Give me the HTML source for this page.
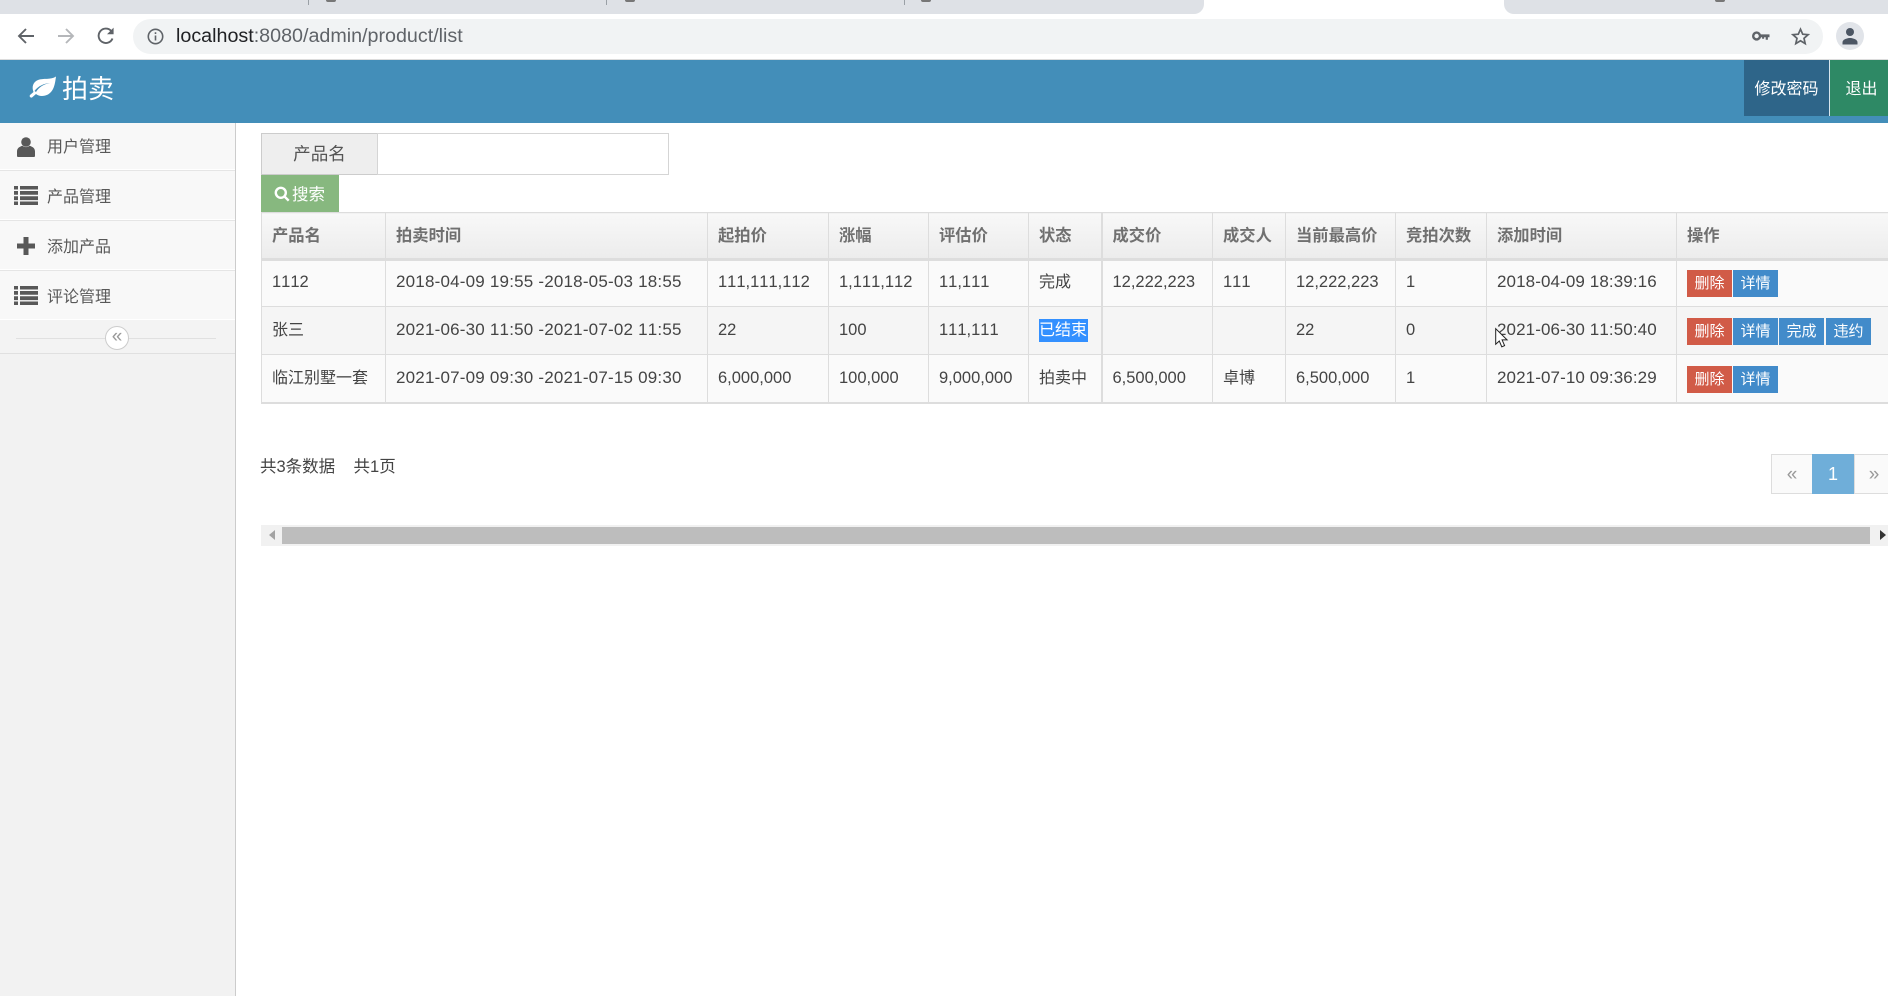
<!DOCTYPE html>
<html lang="zh">
<head>
<meta charset="utf-8">
<title>拍卖</title>
<style>
*{box-sizing:border-box}
html,body{margin:0;padding:0;width:1888px;height:996px;overflow:hidden;background:#fff;font-family:"Liberation Sans","Noto Sans CJK SC",sans-serif;color:#393939;font-kerning:none}
.abs{position:absolute}
svg{position:absolute;display:block;overflow:visible}
#tabs{left:0;top:0;width:1888px;height:14px;background:#dee1e6}
#atab{left:1203px;top:0;width:301px;height:14px;background:#fff}
.sep{top:0;width:1px;height:5px;background:#9aa0a6}
.fav{top:0;width:10px;height:2px;border-radius:0 0 5px 5px;background:#777}
#bar{left:0;top:14px;width:1888px;height:45px;background:#fff}
#bline{left:0;top:59px;width:1888px;height:1px;background:#dcdcdc}
#pill{left:133px;top:19px;width:1690px;height:35px;border-radius:18px;background:#f1f3f4}
#url{left:176px;top:24px;font-size:19.7px;line-height:25px;color:#5f6368;white-space:nowrap}
#url b{font-weight:400;color:#202124}
#av{left:1836px;top:22px;width:28px;height:28px;border-radius:50%;background:#e1e4e9}
#head{left:0;top:60px;width:1888px;height:63px;background:#438eb9}
#logo{left:62px;top:71px;font-size:26px;line-height:36px;color:#fff}
.hb{top:60px;height:56px;color:#fff;font-size:16px;line-height:59px;text-align:center}
#side{left:0;top:123px;width:236px;height:873px;background:#f2f2f2;border-right:1px solid #ccc}
.it{position:absolute;left:0;width:235px;height:50px;background:#f8f8f8;border-bottom:1px solid #e5e5e5;box-shadow:inset 0 -1px 0 #fff;font-size:16px;color:#585858;padding-left:47px}
#col{left:0;top:320px;width:235px;height:34px;border-bottom:1px solid #e0e0e0;background:#f3f3f3}
#ln{left:16px;top:338px;width:200px;height:1px;background:#e0e0e0}
#circ{left:105px;top:326px;width:24px;height:24px;border-radius:50%;background:#fff;border:1px solid #ccc;color:#999;font-size:19px;line-height:19px;text-align:center}
#lab{left:261px;top:133px;width:117px;height:42px;background:#eee;border:1px solid #ccc;font-size:17.6px;line-height:40px;text-align:center;color:#555;padding-left:0}
#inp{left:377px;top:133px;width:292px;height:42px;background:#fff;border:1px solid #d5d5d5}
#sb{left:261px;top:175px;width:78px;height:37px;background:#87b87f;color:#fff;font-size:16.5px;line-height:40px;padding-left:31px}
table{position:absolute;left:261px;top:212px;width:1665px;border-collapse:collapse;table-layout:fixed}
th{height:47px;padding:0 0 3px 10px;text-align:left;font-size:16.3px;font-weight:700;color:#707070;background:linear-gradient(#f8f8f8,#ececec);border:1px solid #ddd;border-bottom:3px solid #ddd}
td{height:48px;padding:0 0 1px 10px;font-size:16px;line-height:20px;color:#444;border:1px solid #ddd;background:#fafafa;white-space:nowrap;vertical-align:middle}
tr.e td{background:#f5f5f5}
tbody tr:first-child td{height:47px;padding-bottom:3px}
tbody tr:last-child td{border-bottom:2px solid #ddd;padding-bottom:0}
td.n{font-size:16.5px}
td.t{font-size:17px;letter-spacing:.2px}
td.u{font-size:17px;letter-spacing:.1px}
td.c,tbody tr td.c{padding-top:2px}
.thk{border-left:2px solid #ddd}
.sel{background:#3390ff;color:#fff;display:inline-block;height:23px;line-height:23px;width:49px;vertical-align:middle}
.btns{display:flex;padding-top:3px}
tbody tr:first-child .btns{padding-top:2px}
tbody tr:last-child .btns{padding-top:2px}
.btn{width:45px;height:27px;font-size:15px;line-height:27px;text-align:center;color:#fff;margin-right:1px}
.r{background:#d15b47}.b{background:#428bca}
#stat{left:260px;top:455px;font-size:16.5px;line-height:24px;color:#444;white-space:pre}
.pg{top:454px;height:40px;text-align:center;line-height:39px;color:#999;font-size:19px;background:#fafafa;border:1px solid #ddd}
#track{left:261px;top:525px;width:1627px;height:21px;background:#f1f1f1}
#thumb{left:282px;top:527px;width:1588px;height:17px;background:#bdbdbd}
</style>
</head>
<body>
<div class="abs" id="tabs"></div>
<div class="abs sep" style="left:308px"></div>
<div class="abs sep" style="left:606px"></div>
<div class="abs sep" style="left:904px"></div>
<div class="abs fav" style="left:326px"></div>
<div class="abs fav" style="left:625px"></div>
<div class="abs fav" style="left:921px"></div>
<div class="abs fav" style="left:1220px"></div>
<div class="abs fav" style="left:1715px"></div>
<div class="abs" id="bar"></div>
<div class="abs" id="atab"></div>
<div class="abs" style="left:1190px;top:0;width:14px;height:14px;background:#fff"></div>
<div class="abs" style="left:1190px;top:0;width:14px;height:14px;background:#dee1e6;border-radius:0 0 10px 0"></div>
<div class="abs" style="left:1504px;top:0;width:14px;height:14px;background:#fff"></div>
<div class="abs" style="left:1504px;top:0;width:14px;height:14px;background:#dee1e6;border-radius:0 0 0 10px"></div>
<div class="abs" id="bline"></div>
<div class="abs" id="pill"></div>

<svg style="left:16px;top:26px" width="20" height="20" viewBox="0 0 20 20" fill="none" stroke="#5f6368" stroke-width="1.9"><path d="M18 10H3M10 3l-7 7 7 7"/></svg>
<svg style="left:56px;top:26px" width="20" height="20" viewBox="0 0 20 20" fill="none" stroke="#b5b7ba" stroke-width="1.9"><path d="M2 10h15M10 3l7 7-7 7"/></svg>
<svg style="left:96px;top:26px" width="20" height="20" viewBox="0 0 20 20" fill="none" stroke="#5f6368" stroke-width="1.9"><path d="M16.5 12.5A7.2 7.2 0 1 1 15.2 5"/><path d="M17.6 1.6v6.6H11z" fill="#5f6368" stroke="none"/></svg>
<svg style="left:147px;top:28px" width="17" height="17" viewBox="0 0 17 17" fill="none" stroke="#5f6368" stroke-width="1.6"><circle cx="8.5" cy="8.5" r="7.2"/><path d="M8.5 7.5v5M8.5 4.2v1.8"/></svg>
<div class="abs" id="url"><b>localhost</b>:8080/admin/product/list</div>
<svg style="left:1752px;top:30px" width="18" height="12" viewBox="0 0 18 12"><circle cx="4.6" cy="6" r="3.4" fill="none" stroke="#5f6368" stroke-width="2.4"/><path d="M7.5 4.4h10v2.8h-1.6v2.6h-2.2V7.2h-1.6v1.6h-2V7.2H7.5z" fill="#5f6368"/></svg>
<svg style="left:1791px;top:27px" width="19" height="19" viewBox="0 0 19 19" fill="none" stroke="#5f6368" stroke-width="1.7"><path d="M9.5 2.2l2.2 5 5.4.5-4.1 3.6 1.2 5.3-4.7-2.8-4.7 2.8 1.2-5.3-4.1-3.6 5.4-.5z"/></svg>
<div class="abs" id="av"></div>
<svg style="left:1841px;top:27px" width="18" height="18" viewBox="0 0 18 18" fill="#4b5563"><circle cx="9" cy="5" r="4"/><path d="M1.5 17.5v-2.2c0-3 5-4.3 7.5-4.3s7.500 1.300 7.500 4.300v2.200z"/></svg>

<div class="abs" id="head"></div>
<svg style="left:29px;top:76px" width="28" height="22" viewBox="0 0 28 22" fill="#fff"><path fill-rule="evenodd" d="M27 .5C26 8 25 15 19 18.500 14 21 9 20 7 18L3 21.500C1.500 22 0 20.500 1 19L4.500 16C2.500 11 4 6 9 4 14 2 22 4 27 .5zM7 16C10 11 15 8 21 7 15 7.500 9 10 5.500 15z"/></svg>
<div class="abs" id="logo">拍卖</div>
<div class="abs hb" style="left:1744px;width:85px;background:#2e6589">修改密码</div>
<div class="abs" style="left:1829px;top:60px;width:1px;height:56px;background:#d8e6ee"></div>
<div class="abs hb" style="left:1830px;width:58px;background:#2e8965;padding-left:5px">退出</div>

<div class="abs" id="side"></div>
<div class="it" style="top:123px;height:48px;line-height:49px">用户管理</div>
<div class="it" style="top:171px;line-height:53px">产品管理</div>
<div class="it" style="top:221px;line-height:53px">添加产品</div>
<div class="it" style="top:271px;line-height:53px">评论管理</div>
<svg style="left:17px;top:137px" width="18" height="20" viewBox="0 0 18 20" fill="#585858"><circle cx="9" cy="5" r="4.8"/><path d="M0 19v-4.500C0 11 3 9.500 5.500 8.800 7 10.500 11 10.500 12.500 8.800 15 9.500 18 11 18 14.500V19c0 .6-.5 1-1 1H1c-.5 0-1-.4-1-1z"/></svg>
<svg style="left:14px;top:186px" width="24" height="19" viewBox="0 0 24 19" fill="#585858"><path d="M0 0h4v3.500H0zM6 0h18v3.500H6zM0 5h4v3.800H0zM6 5h18v3.800H6zM0 10.300h4v3.800H0zM6 10.300h18v3.800H6zM0 15.500h4V19H0zM6 15.500h18V19H6z"/></svg>
<svg style="left:17px;top:237px" width="18" height="18" viewBox="0 0 18 18" fill="#585858"><path d="M6.500 0h5v6.500H18v5h-6.500V18h-5v-6.500H0v-5h6.500z"/></svg>
<svg style="left:14px;top:286px" width="24" height="19" viewBox="0 0 24 19" fill="#585858"><path d="M0 0h4v3.500H0zM6 0h18v3.500H6zM0 5h4v3.800H0zM6 5h18v3.800H6zM0 10.300h4v3.800H0zM6 10.300h18v3.800H6zM0 15.500h4V19H0zM6 15.500h18V19H6z"/></svg>
<div class="abs" id="col"></div>
<div class="abs" id="ln"></div>
<div class="abs" id="circ">«</div>

<div class="abs" id="lab">产品名</div>
<div class="abs" id="inp"></div>
<div class="abs" id="sb">搜索</div>
<svg style="left:274px;top:186px" width="16" height="16" viewBox="0 0 16 16" fill="none" stroke="#fff" stroke-width="2.400"><circle cx="6.800" cy="6.800" r="5"/><path d="M10.500 10.500l4.200 4.200"/></svg>

<table>
<colgroup>
<col style="width:124px"><col style="width:322px"><col style="width:121px"><col style="width:100px"><col style="width:100px"><col style="width:73px"><col style="width:111px"><col style="width:73px"><col style="width:110px"><col style="width:91px"><col style="width:190px"><col style="width:250px">
</colgroup>
<thead><tr>
<th>产品名</th><th>拍卖时间</th><th>起拍价</th><th>涨幅</th><th>评估价</th><th>状态</th><th class="thk">成交价</th><th>成交人</th><th>当前最高价</th><th>竞拍次数</th><th>添加时间</th><th>操作</th>
</tr></thead>
<tbody>
<tr>
<td class="n">1112</td><td class="t">2018-04-09 19:55 -2018-05-03 18:55</td><td class="n">111,111,112</td><td class="n">1,111,112</td><td class="n">11,111</td><td class="c">完成</td><td class="n thk">12,222,223</td><td class="n">111</td><td class="n">12,222,223</td><td class="n">1</td><td class="u">2018-04-09 18:39:16</td>
<td><div class="btns"><div class="btn r">删除</div><div class="btn b">详情</div></div></td>
</tr>
<tr class="e">
<td class="c">张三</td><td class="t">2021-06-30 11:50 -2021-07-02 11:55</td><td class="n">22</td><td class="n">100</td><td class="n">111,111</td><td><span class="sel">已结束</span></td><td class="thk"></td><td></td><td class="n">22</td><td class="n">0</td><td class="u">2021-06-30 11:50:40</td>
<td><div class="btns"><div class="btn r">删除</div><div class="btn b">详情</div><div class="btn b" style="margin-right:2px">完成</div><div class="btn b">违约</div></div></td>
</tr>
<tr>
<td class="c">临江别墅一套</td><td class="t">2021-07-09 09:30 -2021-07-15 09:30</td><td class="n">6,000,000</td><td class="n">100,000</td><td class="n">9,000,000</td><td class="c">拍卖中</td><td class="n thk">6,500,000</td><td class="c">卓博</td><td class="n">6,500,000</td><td class="n">1</td><td class="u">2021-07-10 09:36:29</td>
<td><div class="btns"><div class="btn r">删除</div><div class="btn b">详情</div></div></td>
</tr>
</tbody>
</table>

<div class="abs" id="stat">共3条数据    共1页</div>
<div class="abs pg" style="left:1771px;width:42px">«</div>
<div class="abs pg" style="left:1812px;width:42px;background:#6faed9;border-color:#6faed9;color:#fff;font-size:18px">1</div>
<div class="abs pg" style="left:1854px;width:40px">»</div>

<div class="abs" id="track"></div>
<div class="abs" id="thumb"></div>
<svg style="left:269px;top:530px" width="6" height="10" viewBox="0 0 6 10" fill="#a3a3a3"><path d="M6 0v10L0 5z"/></svg>
<svg style="left:1880px;top:530px" width="6" height="10" viewBox="0 0 6 10" fill="#333"><path d="M0 0v10l6-5z"/></svg>

<svg style="left:1495px;top:328px" width="13" height="20" viewBox="0 0 13 20"><path d="M.7.700v15.600l3.600-3.300 2.500 5.800 2.800-1.200-2.500-5.700h5z" fill="#fff" stroke="#222" stroke-width="1"/></svg>
</body>
</html>
